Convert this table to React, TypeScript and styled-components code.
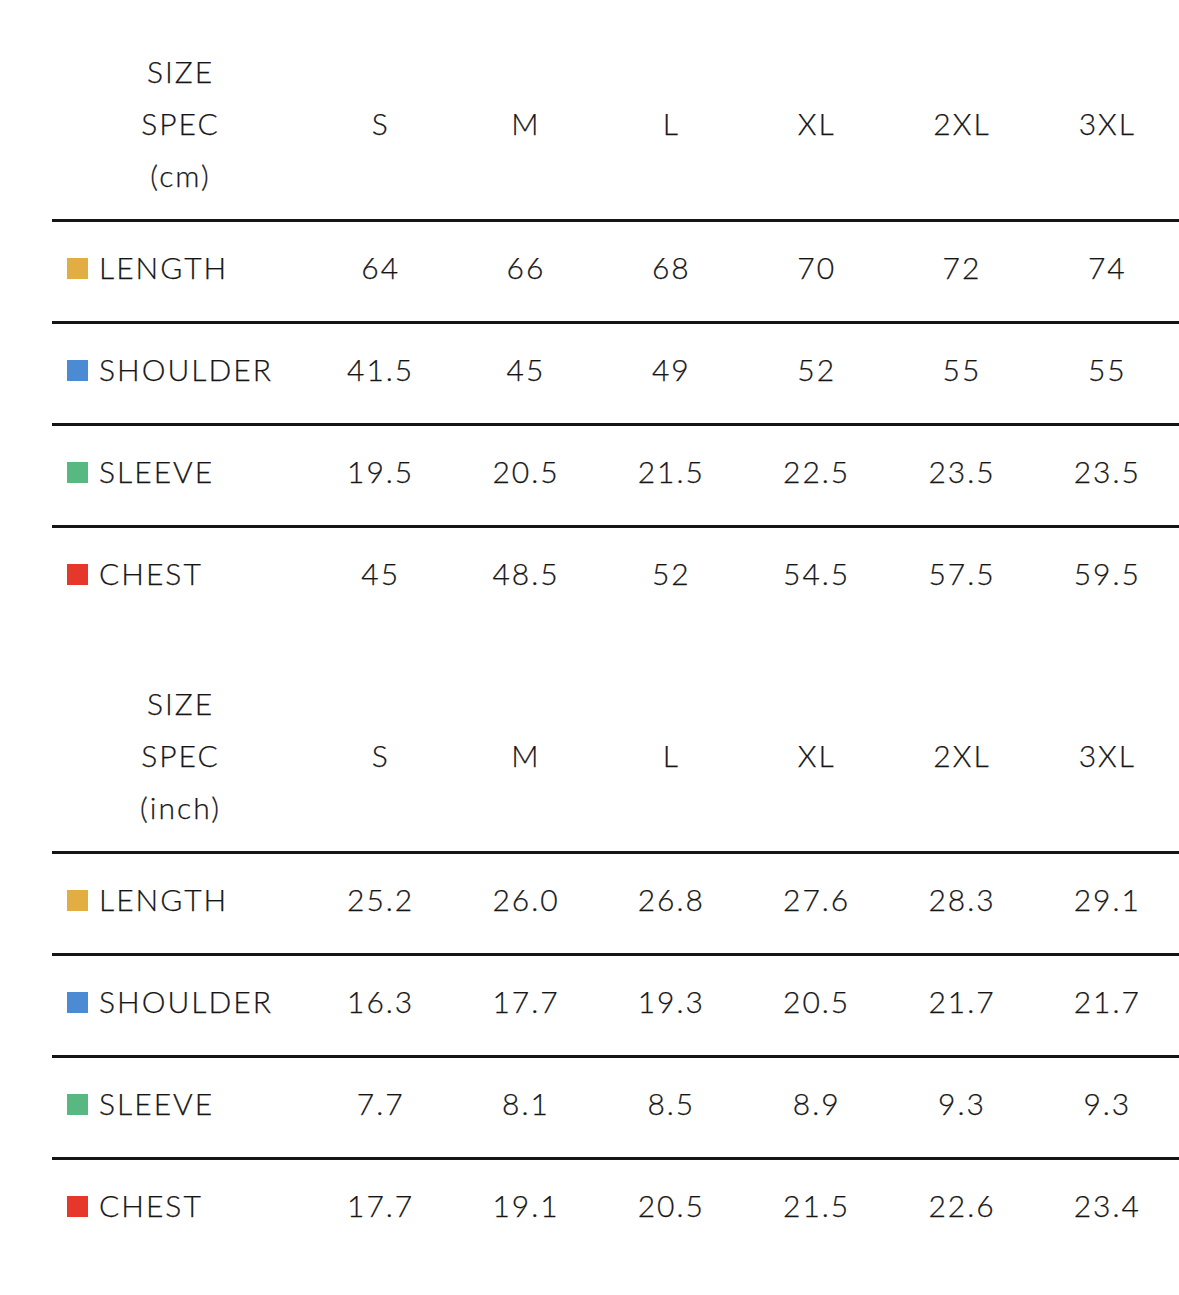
import React from 'react'
import styled, { createGlobalStyle } from 'styled-components'

const GlobalStyle = createGlobalStyle`
  html, body {
    margin: 0;
    padding: 0;
    background: #fff;
  }
  body {
    font-family: Lato, "Noto Sans", sans-serif;
    font-weight: 300;
    color: #161616;
  }
`

const Page = styled.div`
  width: 1179px;
  padding-left: 52px;
  box-sizing: border-box;
`

const Table = styled.div`
  display: grid;
  grid-template-columns: 255px repeat(6, 1fr);
  margin-bottom: 5px;
`

const Row = styled.div<{ $header?: boolean }>`
  display: contents;

  & > div {
    box-sizing: border-box;
    display: flex;
    align-items: center;
    justify-content: center;
    font-size: 30px;
    letter-spacing: 2px;
    padding-left: 2px;
    -webkit-text-stroke: 0.25px #161616;
    ${p =>
      p.$header
        ? `
      height: 219px;
      padding-top: 45px;
      padding-bottom: 18px;
    `
        : `
      height: 102px;
      border-top: 3px solid #151515;
      padding-bottom: 9px;
    `}
  }
`

const Cell = styled.div``

const HeadLabel = styled.div`
  flex-direction: column;
  line-height: 52px;
  text-align: center;
`

const Label = styled.div`
  && {
    justify-content: flex-start;
    padding-left: 15px;
    gap: 11px;
  }
`

const Swatch = styled.span<{ $color: string }>`
  width: 21px;
  height: 21px;
  margin-top: 3px;
  background: ${p => p.$color};
  flex-shrink: 0;
`

const sizes = ['S', 'M', 'L', 'XL', '2XL', '3XL']

const measures = [
  { name: 'LENGTH', color: '#e2ad42' },
  { name: 'SHOULDER', color: '#4a8bd4' },
  { name: 'SLEEVE', color: '#57b882' },
  { name: 'CHEST', color: '#e5372a' },
]

const cm = [
  ['64', '66', '68', '70', '72', '74'],
  ['41.5', '45', '49', '52', '55', '55'],
  ['19.5', '20.5', '21.5', '22.5', '23.5', '23.5'],
  ['45', '48.5', '52', '54.5', '57.5', '59.5'],
]

const inch = [
  ['25.2', '26.0', '26.8', '27.6', '28.3', '29.1'],
  ['16.3', '17.7', '19.3', '20.5', '21.7', '21.7'],
  ['7.7', '8.1', '8.5', '8.9', '9.3', '9.3'],
  ['17.7', '19.1', '20.5', '21.5', '22.6', '23.4'],
]

const SizeTable: React.FC<{ unit: string; data: string[][] }> = ({ unit, data }) => (
  <Table>
    <Row $header>
      <HeadLabel>
        <span>SIZE</span>
        <span>SPEC</span>
        <span>({unit})</span>
      </HeadLabel>
      {sizes.map(s => (
        <Cell key={s}>{s}</Cell>
      ))}
    </Row>
    {measures.map((m, i) => (
      <Row key={m.name}>
        <Label>
          <Swatch $color={m.color} />
          {m.name}
        </Label>
        {data[i].map((v, j) => (
          <Cell key={j}>{v}</Cell>
        ))}
      </Row>
    ))}
  </Table>
)

export default function App() {
  return (
    <Page>
      <GlobalStyle />
      <SizeTable unit="cm" data={cm} />
      <SizeTable unit="inch" data={inch} />
    </Page>
  )
}
